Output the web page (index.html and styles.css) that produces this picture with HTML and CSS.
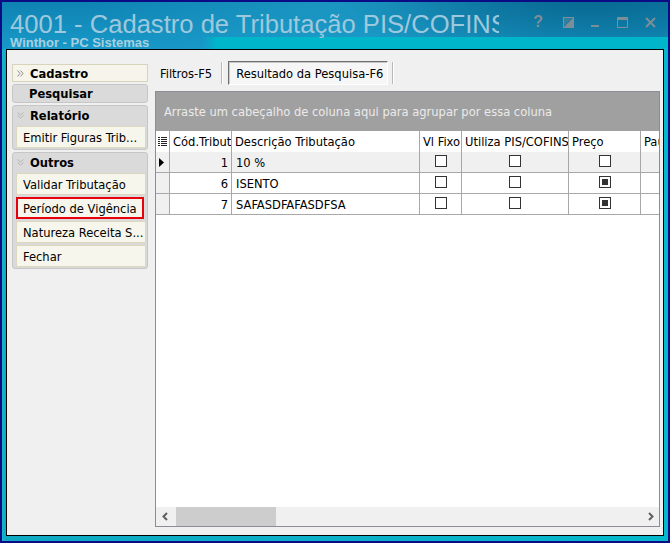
FILE: index.html
```html
<!DOCTYPE html>
<html lang="pt-BR">
<head>
  <meta charset="UTF-8" />
  <title>4001 - Cadastro de Tributação PIS/COFINS</title>
  <link rel="stylesheet" href="styles.css">
</head>
<body>
  <div class="window">
    <div class="titlebar">
      <div class="title-text">
        <div class="title">4001 - Cadastro de Tributação PIS/COFINS</div>
        <div class="subtitle">Winthor - PC Sistemas</div>
      </div>
      <div class="title-buttons">
        <span class="tb-help">?</span>
        <svg width="11" height="11" viewBox="0 0 11 11"><rect x="0.5" y="0.5" width="10" height="10" fill="none" stroke="#7d8e98"/><path d="M1 10 L10 1 L10 10 Z" fill="#7d8e98"/><path d="M1 1 L9 1 L1 9 Z" fill="#7d8e98" opacity="0.35"/></svg>
        <svg width="9" height="11" viewBox="0 0 9 11"><rect x="0" y="8" width="8" height="2" fill="#7d8e98"/></svg>
        <svg width="11" height="11" viewBox="0 0 11 11"><rect x="0.5" y="0.5" width="10" height="10" fill="none" stroke="#7d8e98"/><rect x="0" y="0" width="11" height="3" fill="#7d8e98"/></svg>
        <svg width="11" height="11" viewBox="0 0 11 11"><path d="M1 1 L10 10 M10 1 L1 10" stroke="#7d8e98" stroke-width="2"/></svg>
      </div>
    </div>

    <div class="client">
      <div class="sidebar">
        <div class="nav-head">
          <svg class="chev" width="7" height="7" viewBox="0 0 7 7"><path d="M0.5 0.5 L3 3.5 L0.5 6.5 M3.5 0.5 L6 3.5 L3.5 6.5" fill="none" stroke="#8a8a8a"/></svg>
          Cadastro
        </div>
        <div class="nav-plain">Pesquisar</div>

        <div class="nav-group">
          <div class="group-head">
            <svg class="chev" width="7" height="7" viewBox="0 0 7 7"><path d="M0.5 0.5 L3.5 3 L6.5 0.5 M0.5 3.5 L3.5 6 L6.5 3.5" fill="none" stroke="#b4b4b4"/></svg>
            Relatório
          </div>
          <div class="nav-btn">Emitir Figuras Trib...</div>
        </div>

        <div class="nav-group">
          <div class="group-head">
            <svg class="chev" width="7" height="7" viewBox="0 0 7 7"><path d="M0.5 0.5 L3.5 3 L6.5 0.5 M0.5 3.5 L3.5 6 L6.5 3.5" fill="none" stroke="#b4b4b4"/></svg>
            Outros
          </div>
          <div class="nav-btn">Validar Tributação</div>
          <div class="nav-btn marked">Período de Vigência</div>
          <div class="nav-btn">Natureza Receita S...</div>
          <div class="nav-btn">Fechar</div>
        </div>
      </div>

      <div class="main">
        <div class="tabs">
          <span class="tab">Filtros-F5</span>
          <span class="tab-sep"></span>
          <span class="tab active">Resultado da Pesquisa-F6</span>
          <span class="tab-sep"></span>
        </div>

        <div class="grid">
          <div class="group-panel">Arraste um cabeçalho de coluna aqui para agrupar por essa coluna</div>
          <div class="row header">
            <div class="cell ind">
              <svg width="9" height="9" viewBox="0 0 9 9"><path d="M0 0.5h2M3 0.5h6M0 2.5h2M3 2.5h6M0 4.5h2M3 4.5h6M0 6.5h2M3 6.5h6M0 8.5h2M3 8.5h6" stroke="#222"/></svg>
            </div>
            <div class="cell">Cód.Tributação</div>
            <div class="cell">Descrição Tributação</div>
            <div class="cell">Vl Fixo</div>
            <div class="cell">Utiliza PIS/COFINS</div>
            <div class="cell">Preço</div>
            <div class="cell last">Pauta</div>
          </div>
          <div class="rows" id="rows"></div>
          <div class="hscroll">
            <svg width="8" height="9" viewBox="0 0 8 9"><path d="M6 1 L2.5 4.5 L6 8" fill="none" stroke="#606060" stroke-width="2"/></svg>
            <div class="track"><div class="thumb"></div></div>
            <svg width="8" height="9" viewBox="0 0 8 9"><path d="M2 1 L5.5 4.5 L2 8" fill="none" stroke="#606060" stroke-width="2"/></svg>
          </div>
        </div>
      </div>
    </div>
  </div>

  <script>
    const data = [
      { cod: 1, desc: '10 %', fixo: false, utiliza: false, preco: false },
      { cod: 6, desc: 'ISENTO', fixo: false, utiliza: false, preco: true },
      { cod: 7, desc: 'SAFASDFAFASDFSA', fixo: false, utiliza: false, preco: true }
    ];

    const box = on => `<span class="check${on ? ' on' : ''}"></span>`;

    document.getElementById('rows').innerHTML = data.map((t, i) => `
      <div class="row${i === 0 ? ' current' : ''}">
        <div class="cell ind">${i === 0 ? '<svg width="5" height="9" viewBox="0 0 5 9"><path d="M0 0 L5 4.5 L0 9 Z" fill="#000"/></svg>' : ''}</div>
        <div class="cell num">${t.cod}</div>
        <div class="cell">${t.desc}</div>
        <div class="cell mid">${box(t.fixo)}</div>
        <div class="cell mid">${box(t.utiliza)}</div>
        <div class="cell mid">${box(t.preco)}</div>
        <div class="cell last"></div>
      </div>
    `).join('');
  </script>
</body>
</html>
```

FILE: styles.css
```css
html, body { margin:0; padding:0; }
body { width:670px; height:543px; overflow:hidden; background:#0b0b86; font-family:"DejaVu Sans Condensed", "DejaVu Sans", sans-serif; font-size:12.8px; color:#000; }

.window { box-sizing:border-box; width:670px; height:543px; border:2px solid #0b0b86; display:flex; flex-direction:column;
  background:linear-gradient(to right, #16b4cc, #0fa9c4 4px, #06b8cc 100%); }

.titlebar { height:47px; flex:none; display:flex; justify-content:space-between; overflow:hidden;
  background:
    linear-gradient(to right, rgba(0,182,202,0) 200px, #00b6ca 215px) left bottom / 100% 12px no-repeat,
    radial-gradient(ellipse 260px 80px at 88% -10px, #07668e 0, rgba(7,102,142,0) 100%),
    radial-gradient(ellipse 300px 60px at 58% 0, rgba(40,170,210,0.55) 0, rgba(40,170,210,0) 100%),
    linear-gradient(to bottom, #0f83b3, #1899c8); }
.title-text { width:489px; padding-left:8px; overflow:hidden; white-space:nowrap; }
.title { font-family:"Liberation Sans", Arial, sans-serif; font-size:25.6px; line-height:24px; margin-top:10px; color:#9ec8dc; }
.subtitle { font-family:"Liberation Sans", Arial, sans-serif; font-weight:bold; font-size:13px; line-height:13px; color:#a6d0e0; }

.title-buttons { display:flex; align-items:flex-start; gap:17px; padding:12px 12px 0 0; }
.title-buttons svg { margin-top:3px; }
.tb-help { font-family:"Liberation Sans", Arial, sans-serif; font-weight:bold; font-size:16px; line-height:16px; color:#7d8e98; margin-right:3px; }

.client { flex:1; margin:0 4px 5px 4px; border:1px solid #000; background:#f0f0f0; display:flex; min-height:0; }

.sidebar { box-sizing:border-box; width:148px; flex:none; padding:14px 0 0 5px; display:flex; flex-direction:column; gap:2px; }
.chev { margin:0 6px 0 4px; flex:none; }
.nav-head { box-sizing:border-box; width:136px; height:18px; display:flex; align-items:center; background:#f7f5eb; border:1px solid #d8d4bb; font-weight:bold; }
.nav-plain { box-sizing:border-box; width:136px; height:19px; padding-left:16px; display:flex; align-items:center; background:#dadada; border:1px solid #c6c6c6; border-radius:3px; font-weight:bold; }
.nav-group { box-sizing:border-box; width:136px; background:#dadada; border:1px solid #c6c6c6; border-radius:3px; padding:0 1px 1px 3px; display:flex; flex-direction:column; gap:2px; }
.group-head { height:18px; display:flex; align-items:center; margin-left:-3px; font-weight:bold; }
.nav-btn { box-sizing:border-box; width:130px; height:22px; display:flex; align-items:center; padding-left:6px; background:#f7f6ec; border:1px solid #dcd8c0; white-space:nowrap; }
.nav-btn.marked { border:2px solid #e8000b; padding-left:5px; width:128px; }

.main { flex:1; display:flex; flex-direction:column; padding:11px 3px 8px 0; min-width:0; }
.tabs { height:24px; display:flex; align-items:center; margin-bottom:6px; }
.tab { padding:0 9px 0 5px; }
.tab.active { box-sizing:border-box; height:24px; display:flex; align-items:center; padding:0 4px 0 7px; background:#f6f6f6; border:1px solid; border-color:#6e6e6e #ffffff #ffffff #6e6e6e; box-shadow:inset 1px 1px 0 #c8c8c8; margin-right:4px; }
.tab-sep { width:1px; height:22px; background:#b8b8b8; border-right:1px solid #fff; margin-right:5px; }

.grid { flex:1; display:flex; flex-direction:column; border:1px solid #8c8c98; background:#fff; min-height:0; overflow:hidden; }
.group-panel { height:39px; flex:none; background:#a0a0a0; color:#ebebeb; padding-left:8px; display:flex; align-items:center; white-space:nowrap; }

.row { display:grid; grid-template-columns:14px 62px 188px 42px 107px 72px 1fr; height:21px; }
.rows .cell { border-bottom:1px solid #a8a8a8; }
.cell { box-sizing:border-box; border-right:1px solid #a8a8a8; padding:0 3px 0 4px; display:flex; align-items:center; white-space:nowrap; overflow:hidden; }
.cell.last { border-right:none; }
.cell.ind { background:#f0f0f0; padding:0 0 0 3px; }
.header .cell { background:#fff; padding-left:3px; }
.header .cell.ind { background:#fff; padding-left:2px; }
.row.current .cell { background:#f0f0f0; }
.cell.num { justify-content:flex-end; }
.cell.mid { justify-content:center; padding:0 0 3px 0; }

.check { box-sizing:border-box; width:12px; height:12px; border:1px solid #333; background:#fff; display:flex; align-items:center; justify-content:center; }
.check.on::after { content:""; width:6px; height:6px; background:#333; }

.rows { flex:1; }
.hscroll { height:19px; flex:none; background:#f0f0f0; display:flex; align-items:center; padding:0 4px 0 5px; }
.track { flex:1; height:19px; margin:0 3px 0 2px; }
.thumb { width:100px; height:19px; margin-left:5px; background:#cdcdcd; }
```
